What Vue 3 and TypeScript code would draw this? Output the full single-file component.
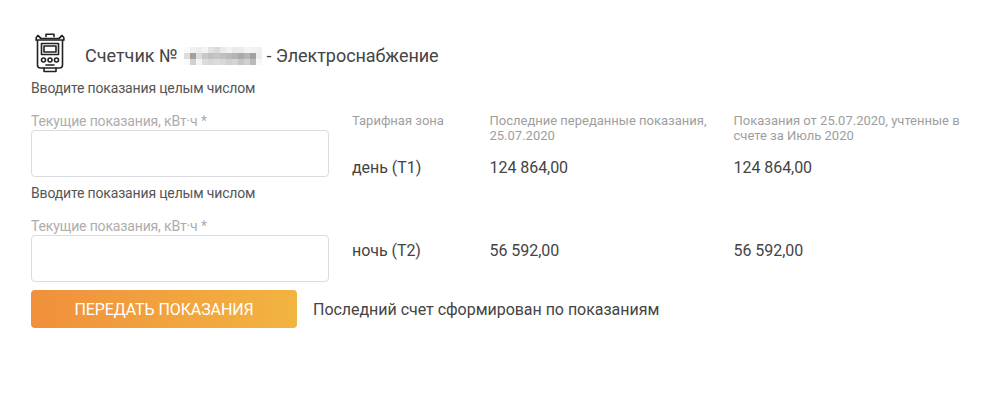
<script setup lang="ts">
interface Row { zone: string; last: string; billed: string }
const rows: Row[] = [
  { zone: 'день (Т1)', last: '124 864,00', billed: '124 864,00' },
  { zone: 'ночь (Т2)', last: '56 592,00', billed: '56 592,00' }
]
const blurRows: number[][] = [
  [250, 240, 236, 244, 226, 218, 234, 243, 234, 236, 244, 242, 240],
  [222, 160, 220, 200, 192, 198, 192, 186, 180, 170, 182, 160, 236],
  [250, 208, 244, 220, 216, 220, 216, 208, 212, 198, 208, 186, 248]
]
function shade(v: number): string {
  return `rgb(${v},${v},${v})`
}
</script>

<template>
  <main class="page">
    <header class="head">
      <svg class="meter" width="30" height="40" viewBox="0 0 30 40" fill="none" stroke="#222" stroke-width="1.6" stroke-linejoin="round" stroke-linecap="round">
        <path d="M11 3.5V1.2h8v2.3" />
        <path d="M3 2.5 6 5.5h18l3-3" />
        <path d="M6 5.5 3 2.5 1.2 4.5v2.5M24 5.5l3-3 1.8 2v2.5" />
        <path d="M1.2 7h27.6M2.5 7v25a3 3 0 0 0 3 3h19a3 3 0 0 0 3-3V7" />
        <rect x="6.5" y="10.5" width="17" height="11" />
        <rect x="9" y="13" width="12" height="6" />
        <circle cx="8.5" cy="27" r="2" />
        <circle cx="15" cy="27" r="2" />
        <circle cx="21.5" cy="27" r="2" />
        <path d="M11 32h8M9 35v3.5h12V35" />
      </svg>
      <h1 class="title">
        <span>Счетчик №</span>
        <svg class="masked" width="78" height="18" viewBox="0 0 78 18" aria-hidden="true">
          <template v-for="(row, y) in blurRows" :key="y">
            <rect v-for="(v, x) in row" :key="x" :x="x * 6" :y="y * 6" width="6" height="6" :fill="shade(v)" />
          </template>
        </svg>
        <span class="service">- Электроснабжение</span>
      </h1>
    </header>

    <section class="readings">
      <div v-for="(row, i) in rows" :key="row.zone" class="row">
        <div class="entry">
          <p class="hint">Вводите показания целым числом</p>
          <label class="field">
            <span class="label">Текущие показания, кВт·ч *</span>
            <input class="input" type="text" />
          </label>
        </div>
        <div class="col zone">
          <span v-if="i === 0" class="caption">Тарифная зона</span>
          <span class="value">{{ row.zone }}</span>
        </div>
        <div class="col last">
          <span v-if="i === 0" class="caption">Последние переданные показания, 25.07.2020</span>
          <span class="value">{{ row.last }}</span>
        </div>
        <div class="col billed">
          <span v-if="i === 0" class="caption">Показания от 25.07.2020, учтенные в счете за Июль 2020</span>
          <span class="value">{{ row.billed }}</span>
        </div>
      </div>
    </section>

    <footer class="actions">
      <button class="submit" type="button">ПЕРЕДАТЬ ПОКАЗАНИЯ</button>
      <span class="note">Последний счет сформирован по показаниям</span>
    </footer>
  </main>
</template>

<style>
html, body { margin: 0; background: #fff; }
</style>

<style scoped>
.page {
  width: 1000px;
  height: 400px;
  box-sizing: border-box;
  padding: 33px 0 0 31px;
  font-family: Roboto, "Noto Sans", sans-serif;
  color: #444;
  overflow: hidden;
}
.head {
  display: flex;
  align-items: flex-start;
  height: 39px;
  padding-left: 4px;
}
.meter { flex: none; }
.title {
  display: flex;
  align-items: center;
  gap: 6px;
  margin: 11px 0 0 20px;
  font-size: 18px;
  font-weight: 400;
  line-height: 24px;
  color: #444;
  white-space: nowrap;
}
.masked { flex: none; }
.service { letter-spacing: -0.05px; margin-left: -1px; }
.row {
  display: flex;
  align-items: flex-end;
  padding-top: 8px;
}
.row + .row .col { padding-bottom: 22px; }
.entry { width: 298px; margin-right: 23px; flex: none; }
.hint {
  margin: 0;
  height: 16px;
  font-size: 14px;
  line-height: 16px;
  letter-spacing: -0.16px;
  color: #555;
  white-space: nowrap;
}
.field { display: block; margin-top: 17px; }
.label {
  display: block;
  height: 16px;
  font-size: 14px;
  line-height: 16px;
  letter-spacing: -0.15px;
  color: #adadad;
  white-space: nowrap;
}
.input {
  display: block;
  width: 100%;
  height: 47px;
  margin-top: 1px;
  box-sizing: border-box;
  border: 1px solid #dcdce0;
  border-radius: 4px;
  background: #fff;
  outline: none;
}
.col {
  display: flex;
  flex-direction: column;
  flex: none;
}
.zone { width: 137.5px; }
.last { width: 244px; }
.billed { width: 232px; }
.caption {
  min-height: 30px;
  margin-bottom: 16px;
  font-size: 13px;
  line-height: 15px;
  color: #9e9e9e;
}
.last .caption { padding-right: 10px; }
.value {
  font-size: 16px;
  line-height: 18px;
  letter-spacing: -0.05px;
  color: #444;
}
.actions {
  display: flex;
  align-items: center;
  margin-top: 8px;
}
.submit {
  width: 266px;
  height: 38px;
  padding: 0;
  border: 0;
  border-radius: 4px;
  background: linear-gradient(90deg, #f0903c, #f2b441);
  color: #fff;
  font-family: inherit;
  font-size: 16px;
  font-weight: 400;
  letter-spacing: -0.1px;
}
.note {
  margin-left: 16px;
  font-size: 16px;
  letter-spacing: -0.03px;
  color: #444;
  white-space: nowrap;
}
</style>
